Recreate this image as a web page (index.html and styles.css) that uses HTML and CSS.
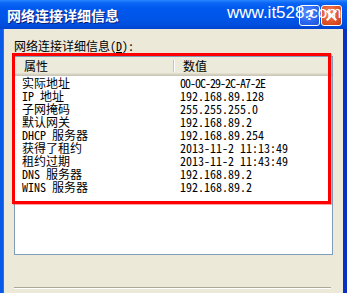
FILE: index.html
```html
<!DOCTYPE html>
<html>
<head>
<meta charset="utf-8">
<link rel="stylesheet" href="styles.css">
</head>
<body>
<div class="window">
  <div class="titlebar">
    <span class="title">网络连接详细信息</span>
    <div class="tb-buttons">
      <span class="tb-btn help">?</span>
      <span class="tb-btn close"><svg width="11" height="11" viewBox="0 0 11 11"><path d="M1.5 1.5 L9.5 9.5 M9.5 1.5 L1.5 9.5" stroke="#fff" stroke-width="2.2" stroke-linecap="square"/></svg></span>
    </div>
    <span class="watermark">www.it528.com</span>
  </div>
  <div class="client">
    <div class="group-label">网络连接详细信息(<u>D</u>):</div>
    <div class="listview">
      <div class="lv-header">
        <div class="hcol h1">属性</div>
        <div class="hcol h2">数值</div>
      </div>
      <div class="lv-body">
        <div class="row"><span class="c1">实际地址</span><span class="c2 mac">00-0C-29-2C-A7-2E</span></div>
        <div class="row"><span class="c1">IP 地址</span><span class="c2">192.168.89.128</span></div>
        <div class="row"><span class="c1">子网掩码</span><span class="c2">255.255.255.0</span></div>
        <div class="row"><span class="c1">默认网关</span><span class="c2">192.168.89.2</span></div>
        <div class="row"><span class="c1">DHCP 服务器</span><span class="c2">192.168.89.254</span></div>
        <div class="row"><span class="c1">获得了租约</span><span class="c2">2013-11-2 11:13:49</span></div>
        <div class="row"><span class="c1">租约过期</span><span class="c2">2013-11-2 11:43:49</span></div>
        <div class="row"><span class="c1">DNS 服务器</span><span class="c2">192.168.89.2</span></div>
        <div class="row"><span class="c1">WINS 服务器</span><span class="c2">192.168.89.2</span></div>
      </div>
    </div>
    <div class="annot"></div>
    <div class="separator"></div>
  </div>
</div>
</body>
</html>
```

FILE: styles.css
```css
* { box-sizing: border-box; }
html, body {
  margin: 0;
  padding: 0;
  width: 347px;
  height: 293px;
  overflow: hidden;
  background: #ece9d8;
}
.window {
  width: 347px;
  height: 293px;
  display: flex;
  flex-direction: column;
}
.titlebar {
  position: relative;
  height: 29px;
  flex: none;
  display: flex;
  align-items: center;
  justify-content: space-between;
  padding: 1px 5px 0 7px;
  background: linear-gradient(to bottom, #2a86ff 0px, #0a66f5 3px, #0058ee 9px, #0055e8 18px, #004ede 25px, #0043cf 29px);
}
.title {
  font-family: "Noto Sans CJK SC", sans-serif;
  font-weight: bold;
  font-size: 14px;
  line-height: 16px;
  color: #fff;
  text-shadow: 1px 1px 0 #0a1e78;
}
.tb-buttons {
  display: flex;
  gap: 1px;
}
.tb-btn {
  width: 21px;
  height: 21px;
  border: 1px solid #fff;
  border-radius: 3px;
  display: flex;
  align-items: center;
  justify-content: center;
  color: #fff;
  font-family: "Liberation Sans", sans-serif;
  font-weight: bold;
  font-size: 14px;
}
.tb-btn.help {
  background: radial-gradient(circle at 40% 35%, #5a92ff 0%, #2a66ee 60%, #1a50d8 100%);
}
.tb-btn.close {
  background: radial-gradient(circle at 40% 35%, #ef8a68 0%, #e2562c 55%, #c63a12 100%);
}
.watermark {
  position: absolute;
  left: 227px;
  top: 4px;
  font-family: "Liberation Sans", sans-serif;
  font-size: 17px;
  line-height: 17px;
  color: #fff;
  white-space: nowrap;
}
.client {
  position: relative;
  flex: 1;
  border-left: 3px solid #0a5ae8;
  border-right: 4px solid #0b2fc4;
  box-shadow: inset 1px 0 0 #2472f0;
  padding: 10px 10px 0 11px;
  display: flex;
  flex-direction: column;
  font-family: "Noto Sans Mono CJK SC", "Noto Sans CJK SC", sans-serif;
  font-size: 12px;
  color: #000;
}
.group-label {
  line-height: 14px;
  height: 14px;
}
.group-label u {
  text-decoration: underline;
  text-underline-offset: 1px;
}
.listview {
  margin-top: 3px;
  width: 319px;
  height: 199px;
  border: 1px solid #7f9db9;
  background: #fff;
  flex: none;
}
.lv-header {
  height: 19px;
  display: flex;
  background: linear-gradient(to bottom, #ebeadb 0px, #ebeadb 16px, #e2decd 16px, #e2decd 17px, #d6d2c2 17px, #d6d2c2 18px, #cbc7b8 18px);
  line-height: 17px;
}
.hcol {
  position: relative;
  padding-left: 9px;
}
.h1 {
  width: 159px;
}
.h1::after {
  content: "";
  position: absolute;
  right: 0;
  top: 3px;
  height: 12px;
  width: 1px;
  background: #c7c5b2;
  box-shadow: 1px 0 0 #fff;
}
.h2 {
  padding-left: 9px;
}
.row {
  display: flex;
  height: 13px;
  line-height: 13px;
  white-space: nowrap;
}
.c1 {
  width: 159px;
  padding-left: 7px;
}
.c2 {
  padding-left: 6px;
}
.c2.mac {
  letter-spacing: -1px;
}
.annot {
  position: absolute;
  left: 9px;
  top: 24px;
  width: 319px;
  height: 151px;
  border: 3px solid #ff0000;
  box-shadow: 1px 1px 0 rgba(255, 80, 80, 0.55);
}
.separator {
  margin-top: 32px;
  height: 2px;
  width: 317px;
  border-top: 1px solid #aca899;
  border-bottom: 1px solid #fff;
}
```
